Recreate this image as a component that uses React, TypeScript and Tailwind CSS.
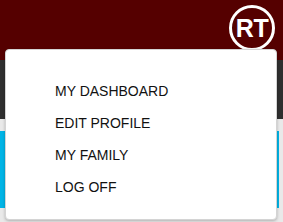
import { useState } from 'react'

export default function App() {
  const [open] = useState(true)

  const items = ['MY DASHBOARD', 'EDIT PROFILE', 'MY FAMILY', 'LOG OFF']

  return (
    <div className="relative w-[283px] h-[222px] overflow-hidden bg-[#e9e9e9] font-['Liberation_Sans',Arial,sans-serif]">
      <header className="h-[60px] bg-[#550000] flex items-start justify-end pr-[8px] pt-[5px]">
        <div className="w-[46px] h-[46px] rounded-full border-[3px] border-white flex items-center justify-center">
          <span className="text-white font-bold text-[25px] leading-none tracking-[-0.5px]">RT</span>
        </div>
      </header>
      <div className="h-[59px] bg-[#2f2f2f]" />
      <div className="pt-[12px] pr-[4px]">
        <div className="h-[77px] bg-[#00b4e6]" />
      </div>

      {open && (
        <div className="absolute left-[5px] top-[49px] w-[272px] h-[171px] bg-white rounded-[4px] border border-[#d4d4d4] shadow-[0_1px_3px_rgba(0,0,0,0.25)]">
          <ul className="pt-[32px] pl-[49px] flex flex-col gap-[13px]">
            {items.map((item) => (
              <li key={item} className="text-[14px] leading-[19px] text-[#111]">
                {item}
              </li>
            ))}
          </ul>
        </div>
      )}
    </div>
  )
}
